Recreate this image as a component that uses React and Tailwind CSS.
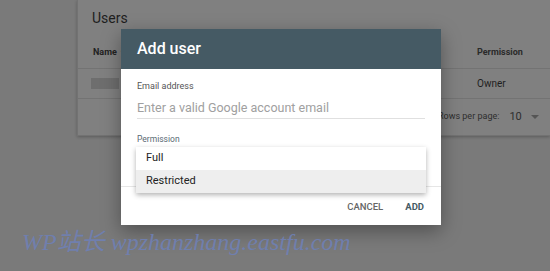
import React from "react";

export default function App() {
  return (
    <div className="relative w-[550px] h-[271px] overflow-hidden bg-[#7a7a7a]" style={{ fontFamily: "Roboto, 'Liberation Sans', sans-serif" }}>
      {/* background card */}
      <div className="ml-[77px] h-[136px] bg-[#808080] border-l border-b border-[#727272] shadow-[0_1px_3px_rgba(0,0,0,0.25)] flex flex-col">
        <div className="pl-[14px] pt-[8px] h-[38px] text-[14px] text-[#1e1e1e]">Users</div>
        <div className="h-[31px] flex items-center border-b border-[#737373] text-[9px] font-bold text-[#222]">
          <div className="pl-[15px] flex items-center gap-[3px]">Name <span className="text-[9px]">↑</span></div>
          <div className="ml-auto w-[73px] text-[#2a2a2a]">Permission</div>
        </div>
        <div className="h-[30px] flex items-center border-b border-[#737373] text-[10px] text-[#1e1e1e]">
          <div className="ml-[13px] w-[28px] h-[11px] bg-[#6e6e6e]"></div>
          <div className="ml-auto w-[73px]">Owner</div>
        </div>
        <div className="flex-1 flex items-center text-[#2e2e2e] whitespace-nowrap">
          <div className="ml-[360px] text-[9px]">Rows per page:</div>
          <div className="ml-[10px] text-[11px]">10</div>
          <svg className="ml-[9px]" width="8" height="4" viewBox="0 0 8 4"><path d="M0 0L8 0L4 4Z" fill="#555" /></svg>
        </div>
      </div>

      {/* dialog */}
      <div className="absolute left-[121px] top-[29px] w-[320px] h-[196px] bg-white shadow-[0_6px_18px_rgba(0,0,0,0.35)] flex flex-col">
        <div className="h-[40px] bg-[#455a64] flex items-center pl-[16px] text-white text-[16px] font-medium">Add user</div>
        <div className="px-[16px] pt-[12px] flex flex-col">
          <div className="text-[9px] text-[#555] leading-[11px]">Email address</div>
          <div className="mt-[9px] text-[12.5px] text-[#a0a0a0] leading-[14px] pb-[3px] border-b border-[#e0e0e0]">Enter a valid Google account email</div>
          <div className="mt-[15px] text-[8.5px] text-[#5a6a73] leading-[10px]">Permission</div>
        </div>
        <div className="mt-[42px] border-t border-[#e6e6e6] flex-1 flex items-center justify-end pr-[17px] pt-[2px] gap-[22px] text-[9.5px] font-medium">
          <span className="text-[#666]">CANCEL</span>
          <span className="text-[#455a64] font-bold">ADD</span>
        </div>
        {/* menu */}
        <div className="absolute left-[15px] top-[118px] w-[290px] bg-white shadow-[0_2px_5px_rgba(0,0,0,0.3)] flex flex-col text-[11px] text-[#222]">
          <div className="h-[23px] flex items-center pl-[10px]">Full</div>
          <div className="h-[23px] flex items-center pl-[10px] bg-[#eeeeee]">Restricted</div>
        </div>
      </div>

      {/* watermark */}
      <div className="absolute left-[22px] top-[224px] text-[24px] italic text-[#6f80b4] opacity-90 whitespace-nowrap" style={{ fontFamily: "'Liberation Serif', 'Noto Sans CJK SC', serif" }}>
        WP站长 wpzhanzhang.eastfu.com
      </div>
    </div>
  );
}
